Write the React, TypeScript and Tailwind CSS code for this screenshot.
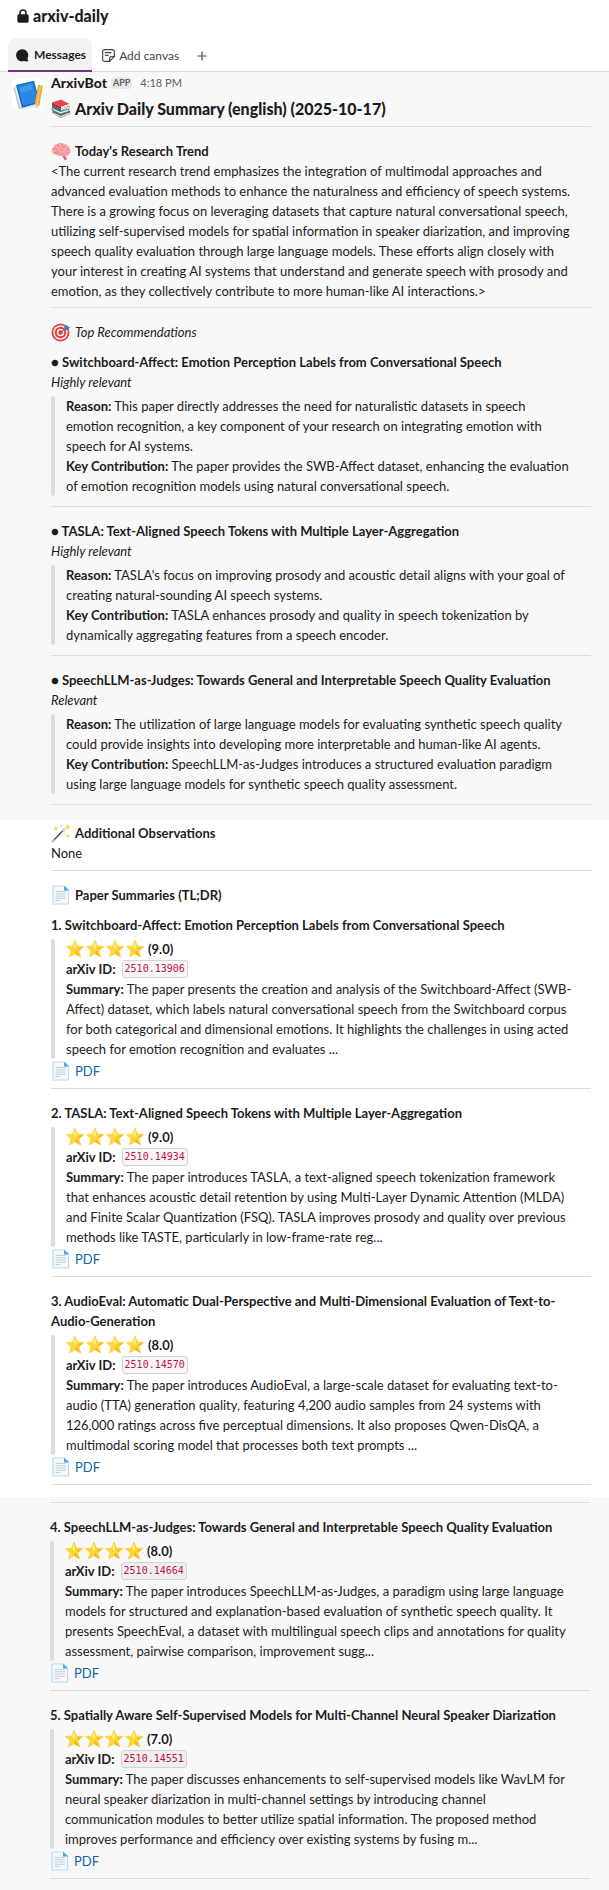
import type { ReactNode } from "react";
import { Plus } from "lucide-react";

type Recommendation = {
  title: string;
  relevance: string;
  reason: string;
  contribution: string;
};

type Paper = {
  title: string;
  score: string;
  id: string;
  summary: string;
};

const trend = `<The current research trend emphasizes the integration of multimodal approaches and
advanced evaluation methods to enhance the naturalness and efficiency of speech systems.
There is a growing focus on leveraging datasets that capture natural conversational speech,
utilizing self-supervised models for spatial information in speaker diarization, and improving
speech quality evaluation through large language models. These efforts align closely with
your interest in creating AI systems that understand and generate speech with prosody and
emotion, as they collectively contribute to more human-like AI interactions.>`;

const recommendations: Recommendation[] = [
  {
    title: "Switchboard-Affect: Emotion Perception Labels from Conversational Speech",
    relevance: "Highly relevant",
    reason: `This paper directly addresses the need for naturalistic datasets in speech
emotion recognition, a key component of your research on integrating emotion with
speech for AI systems.`,
    contribution: `The paper provides the SWB-Affect dataset, enhancing the evaluation
of emotion recognition models using natural conversational speech.`,
  },
  {
    title: "TASLA: Text-Aligned Speech Tokens with Multiple Layer-Aggregation",
    relevance: "Highly relevant",
    reason: `TASLA's focus on improving prosody and acoustic detail aligns with your goal of
creating natural-sounding AI speech systems.`,
    contribution: `TASLA enhances prosody and quality in speech tokenization by
dynamically aggregating features from a speech encoder.`,
  },
  {
    title: "SpeechLLM-as-Judges: Towards General and Interpretable Speech Quality Evaluation",
    relevance: "Relevant",
    reason: `The utilization of large language models for evaluating synthetic speech quality
could provide insights into developing more interpretable and human-like AI agents.`,
    contribution: `SpeechLLM-as-Judges introduces a structured evaluation paradigm
using large language models for synthetic speech quality assessment.`,
  },
];

const firstPapers: Paper[] = [
  {
    title: "1. Switchboard-Affect: Emotion Perception Labels from Conversational Speech",
    score: "(9.0)",
    id: "2510.13906",
    summary: `The paper presents the creation and analysis of the Switchboard-Affect (SWB-
Affect) dataset, which labels natural conversational speech from the Switchboard corpus
for both categorical and dimensional emotions. It highlights the challenges in using acted
speech for emotion recognition and evaluates ...`,
  },
  {
    title: "2. TASLA: Text-Aligned Speech Tokens with Multiple Layer-Aggregation",
    score: "(9.0)",
    id: "2510.14934",
    summary: `The paper introduces TASLA, a text-aligned speech tokenization framework
that enhances acoustic detail retention by using Multi-Layer Dynamic Attention (MLDA)
and Finite Scalar Quantization (FSQ). TASLA improves prosody and quality over previous
methods like TASTE, particularly in low-frame-rate reg...`,
  },
  {
    title: `3. AudioEval: Automatic Dual-Perspective and Multi-Dimensional Evaluation of Text-to-
Audio-Generation`,
    score: "(8.0)",
    id: "2510.14570",
    summary: `The paper introduces AudioEval, a large-scale dataset for evaluating text-to-
audio (TTA) generation quality, featuring 4,200 audio samples from 24 systems with
126,000 ratings across five perceptual dimensions. It also proposes Qwen-DisQA, a
multimodal scoring model that processes both text prompts ...`,
  },
];

const morePapers: Paper[] = [
  {
    title: "4. SpeechLLM-as-Judges: Towards General and Interpretable Speech Quality Evaluation",
    score: "(8.0)",
    id: "2510.14664",
    summary: `The paper introduces SpeechLLM-as-Judges, a paradigm using large language
models for structured and explanation-based evaluation of synthetic speech quality. It
presents SpeechEval, a dataset with multilingual speech clips and annotations for quality
assessment, pairwise comparison, improvement sugg...`,
  },
  {
    title: "5. Spatially Aware Self-Supervised Models for Multi-Channel Neural Speaker Diarization",
    score: "(7.0)",
    id: "2510.14551",
    summary: `The paper discusses enhancements to self-supervised models like WavLM for
neural speaker diarization in multi-channel settings by introducing channel
communication modules to better utilize spatial information. The proposed method
improves performance and efficiency over existing systems by fusing m...`,
  },
];

function Emoji({ children }: { children: ReactNode }) {
  return (
    <svg viewBox="0 0 40 40" className="h-5 w-5 shrink-0" aria-hidden="true">
      {children}
    </svg>
  );
}

function Books() {
  return (
    <Emoji>
      <path d="M3 28 L19 38 L38 30 L38 24 L20 22 L3 24z" fill="#5b6063" />
      <path d="M5 27 L19 34 L37 27 L37 30 L19 37 L5 29z" fill="#e9e4d8" />
      <path d="M1 18 L20 23 L37 19 L36 25 L19 31 L2 23z" fill="#2f8f86" />
      <path d="M4 20 L19 26 L35 21 L35 24 L19 29 L4 22z" fill="#efeee6" />
      <path d="M2 12 L18 19 L36 13 L38 16 L19 24 L2 17z" fill="#4f5a66" />
      <path d="M20 20 L37 14 L36 17 L20 23z" fill="#e7ebee" />
      <path d="M2 7 L20 1 L37 10 L20 16z" fill="#e5484a" />
      <path d="M2 7 L20 16 L20 20 L2 12z" fill="#a92a2f" />
      <path d="M20 16 L37 10 L37 13 L20 20z" fill="#f3eee6" />
    </Emoji>
  );
}

function Brain() {
  return (
    <Emoji>
      <path d="M22 29 L27 27 L32 36 Q30 39 27 38z" fill="#c96f75" />
      <path
        d="M2 21 Q0 15 5 12 Q7 6 13 6 Q18 2 23 5 Q29 4 32 9 Q38 11 38 17 Q41 23 36 27 Q33 32 27 30 Q22 33 18 29 Q13 31 10 27 Q3 27 2 21z"
        fill="#f9a9aa"
      />
      <path
        d="M5 16 Q10 12 13 17 M13 7 Q12 11 17 12 M23 6 Q20 10 24 13 Q28 13 29 10 M18 17 Q23 15 25 20 M31 16 Q36 15 36 19 M9 22 Q14 19 17 24 M19 27 Q22 23 27 26 M29 22 Q33 21 34 25 M6 24 Q9 26 12 25"
        fill="none"
        stroke="#d97a7f"
        strokeWidth="1.6"
        strokeLinecap="round"
      />
    </Emoji>
  );
}

function Target() {
  return (
    <Emoji>
      <circle cx="19" cy="21" r="18" fill="#e8393c" />
      <circle cx="19" cy="21" r="14.5" fill="#f7f2f2" />
      <circle cx="19" cy="21" r="11.5" fill="#e8393c" />
      <circle cx="19" cy="21" r="7.5" fill="#f7f2f2" />
      <circle cx="19" cy="21" r="4.5" fill="#e8393c" />
      <path d="M19 21 L31 11" stroke="#33658c" strokeWidth="2" />
      <path d="M26 10 L32 6 L34 9 L38 10 L34 16 L28 16z" fill="#2f80c9" />
    </Emoji>
  );
}

function Wand() {
  return (
    <Emoji>
      <path d="M2 38 L27 12" stroke="#4c4d55" strokeWidth="3" />
      <path d="M1 39 L7 33" stroke="#c9c6dd" strokeWidth="3.4" />
      <path d="M23 16 L28 11" stroke="#d9d9df" strokeWidth="3.2" />
      <path
        d="M32 2 L34 5 L38 5 L36 9 L38 12 L34 12 L31 14 L30 10 L27 8 L31 6z M9 6 L11 9 L15 9 L12 12 L13 16 L9 14 L6 15 L7 11 L4 9 L8 9z M33 21 L35 24 L38 24 L36 27 L37 30 L33 28 L30 29 L31 26 L29 23 L32 24z"
        fill="#fbdc5e"
      />
      <circle cx="20" cy="7" r="2.2" fill="#fce58a" />
      <circle cx="27" cy="21" r="2.2" fill="#fce58a" />
    </Emoji>
  );
}

function Page() {
  return (
    <Emoji>
      <path d="M4 2 H27 L35 10 V38 H4z" fill="#f3fafe" stroke="#b5dcf1" strokeWidth="2.4" />
      <path d="M26 1.5 L36 11 H26z" fill="#4da9dd" />
      <path
        d="M9 13 H30 M9 17.5 H30 M9 22 H30 M9 26.5 H30 M9 31 H19"
        stroke="#c9cfd3"
        strokeWidth="2"
      />
    </Emoji>
  );
}

function Star() {
  return (
    <Emoji>
      <path
        d="M18 2 L23 14 L36 15 L26 23.5 L29.5 36 L18 29.5 L6.5 36 L10 23.5 L0.5 15 L13 14z"
        fill="#fdd835"
        stroke="#f9c62b"
        strokeWidth="1"
        strokeLinejoin="round"
      />
      <path d="M18 5 L20 17 L18 20 L14.5 15z" fill="#fff08a" />
      <path d="M18 29 L20 22 L29 36z M25 22 L34 16 L24 18z" fill="#f4b126" />
    </Emoji>
  );
}

function Avatar() {
  return (
    <svg viewBox="0 0 93 93" className="h-[31px] w-[31px] rounded-md bg-white" role="img" aria-label="ArxivBot">
      <path d="M4 27 L12 20 L32 89 L21 91z" fill="#c3c9ce" />
      <path d="M8 25 L12 22 L31 86 L26 88z" fill="#eef0f2" />
      <path d="M12 18 L66 5 L84 72 L30 87z" fill="#1668bd" />
      <path d="M17 21 L63 10 L79 68 L33 80z" fill="#2a87e2" />
      <path d="M23 26 L58 17 L62 32 L27 41z" fill="#4298ea" />
      <path d="M30 87 L84 72 L87 78 L34 92z" fill="#dfe4e8" />
      <path d="M78 17 L93 20 L82 80 L68 76z" fill="#e9a93b" />
      <path d="M83 18 L88 19 L77 78 L72 77z" fill="#f7c660" />
      <path d="M68 76 L82 80 L72 91z" fill="#e7d0a7" />
    </svg>
  );
}

function Lock() {
  return (
    <svg viewBox="0 0 36 42" className="h-[14px] w-[12px]" aria-hidden="true">
      <path d="M9 19 V12 A9 9 0 0 1 27 12 V19" fill="none" stroke="#1d1c1d" strokeWidth="4.5" />
      <rect x="1" y="16" width="34" height="25" rx="5" fill="#1d1c1d" />
    </svg>
  );
}

function MessageIcon() {
  return (
    <svg viewBox="0 0 39 39" className="h-[13px] w-[13px]" aria-hidden="true">
      <path
        d="M19 1 A18 18 0 1 0 24 36 Q30 38 36 37 Q38 36 36 34 Q34 31 35 27 A18 18 0 0 0 19 1z"
        fill="#1d1c1d"
      />
    </svg>
  );
}

function CanvasIcon() {
  return (
    <svg
      viewBox="0 0 39 39"
      className="h-[13px] w-[13px]"
      fill="none"
      stroke="#454447"
      strokeWidth="3.4"
      strokeLinecap="round"
      strokeLinejoin="round"
      aria-hidden="true"
    >
      <path d="M8 2 H31 Q37 2 37 8 V22 L23 37 H8 Q2 37 2 31 V8 Q2 2 8 2z" />
      <path d="M23 37 V28 Q23 23 28 23 H37" />
      <path d="M10 11 H27 M10 19 H18" />
    </svg>
  );
}

function Divider() {
  return <hr className="border-t border-[#dddddd]" />;
}

function Quote({ children }: { children: ReactNode }) {
  return (
    <blockquote className="flex gap-[11px]">
      <span className="w-1 shrink-0 rounded-full bg-[#dddddd]" />
      <div className="min-w-0 flex-1 whitespace-pre-line">{children}</div>
    </blockquote>
  );
}

function RecommendationBlock({ item }: { item: Recommendation }) {
  return (
    <article>
      <h3 className="font-bold">● {item.title}</h3>
      <p className="mb-1 italic">{item.relevance}</p>
      <Quote>
        <p>
          <b>Reason:</b> {item.reason}
        </p>
        <p>
          <b>Key Contribution:</b> {item.contribution}
        </p>
      </Quote>
      <div className="pt-2.5 pb-3.5">
        <Divider />
      </div>
    </article>
  );
}

function PaperBlock({ paper }: { paper: Paper }) {
  return (
    <article className="pt-2.5 pb-1">
      <h3 className="font-bold whitespace-pre-line">{paper.title}</h3>
      <div className="pt-1 pb-0.5">
        <Quote>
          <p className="flex items-center gap-0.5 font-bold">
            <span className="flex" role="img" aria-label="4 stars">
              <Star />
              <Star />
              <Star />
              <Star />
            </span>
            {paper.score}
          </p>
          <p className="flex items-center gap-1.5 font-bold">
            arXiv ID:
            <code className="rounded-[3px] border border-[#d4d4d4] bg-[#1d1c1d]/4 px-0.5 font-['DejaVu_Sans_Mono',monospace] text-[10px] leading-4 font-normal text-[#c01343]">
              {paper.id}
            </code>
          </p>
          <p>
            <b>Summary:</b> {paper.summary}
          </p>
        </Quote>
      </div>
      <p className="mb-[7px] flex items-center gap-1">
        <Page />
        <a href="#pdf" className="text-[#1264a3]">
          PDF
        </a>
      </p>
      <Divider />
    </article>
  );
}

export default function App() {
  return (
    <main className="bg-white font-[Lato,sans-serif] text-[13px] leading-5 text-[#1d1c1d]">
      <header>
        <h1 className="flex items-center gap-1 px-[17px] pt-1 pb-2.5 text-[16px] leading-6 font-black">
          <Lock />
          arxiv-daily
        </h1>
        <nav className="flex border-b border-[#dddddd] px-2 text-[12px]">
          <button className="-mb-px flex h-[34px] items-center gap-[5px] rounded-t-lg border-b-2 border-[#7c3085] bg-[#f3f3f3] pt-0.5 pr-1.5 pl-2 font-bold">
            <MessageIcon />
            Messages
          </button>
          <button className="ml-2.5 flex items-center gap-1 pt-0.5 text-[#454447]">
            <CanvasIcon />
            Add canvas
          </button>
          <button className="ml-4 pt-0.5 text-[#454447]" aria-label="Add tab">
            <Plus size={14} strokeWidth={2} />
          </button>
        </nav>
      </header>

      <section className="flex gap-2 bg-[#f8f8f8] pr-[18px] pb-px pl-3">
        <div className="w-[31px] shrink-0 pt-[7px]">
          <Avatar />
        </div>
        <div className="min-w-0 flex-1">
          <div className="flex items-center pt-px">
            <span className="text-[14px] font-black">ArxivBot</span>
            <span className="ml-1 rounded-sm bg-[#e8e8e8] px-0.5 text-[9px] leading-3 font-bold text-[#616061]">
              APP
            </span>
            <time className="ml-2 text-[11px] text-[#616061]">4:18 PM</time>
          </div>
          <h2 className="mt-1.5 mb-[7px] flex items-center gap-1 text-[16px] font-black">
            <Books />
            Arxiv Daily Summary (english) (2025-10-17)
          </h2>
          <Divider />
          <h3 className="mt-3.5 flex items-center gap-1 font-bold">
            <Brain />
            Today&apos;s Research Trend
          </h3>
          <p className="mb-1.5 whitespace-pre-line">{trend}</p>
          <Divider />
          <h3 className="mt-3.5 mb-2.5 flex items-center gap-1 italic">
            <Target />
            Top Recommendations
          </h3>
          {recommendations.map((item) => (
            <RecommendationBlock key={item.title} item={item} />
          ))}
        </div>
      </section>

      <section className="pt-[3px] pr-[18px] pb-2 pl-[51px]">
        <h3 className="flex items-center gap-1 font-bold">
          <Wand />
          Additional Observations
        </h3>
        <p className="mb-[7px]">None</p>
        <Divider />
        <h3 className="mt-3.5 flex items-center gap-1 font-bold">
          <Page />
          Paper Summaries (TL;DR)
        </h3>
        {firstPapers.map((paper) => (
          <PaperBlock key={paper.id} paper={paper} />
        ))}
      </section>

      <section className="bg-[#f8f8f8] pt-[5px] pr-[19px] pb-[7px] pl-[50px]">
        <div className="pb-1">
          <Divider />
        </div>
        {morePapers.map((paper) => (
          <PaperBlock key={paper.id} paper={paper} />
        ))}
      </section>
    </main>
  );
}
